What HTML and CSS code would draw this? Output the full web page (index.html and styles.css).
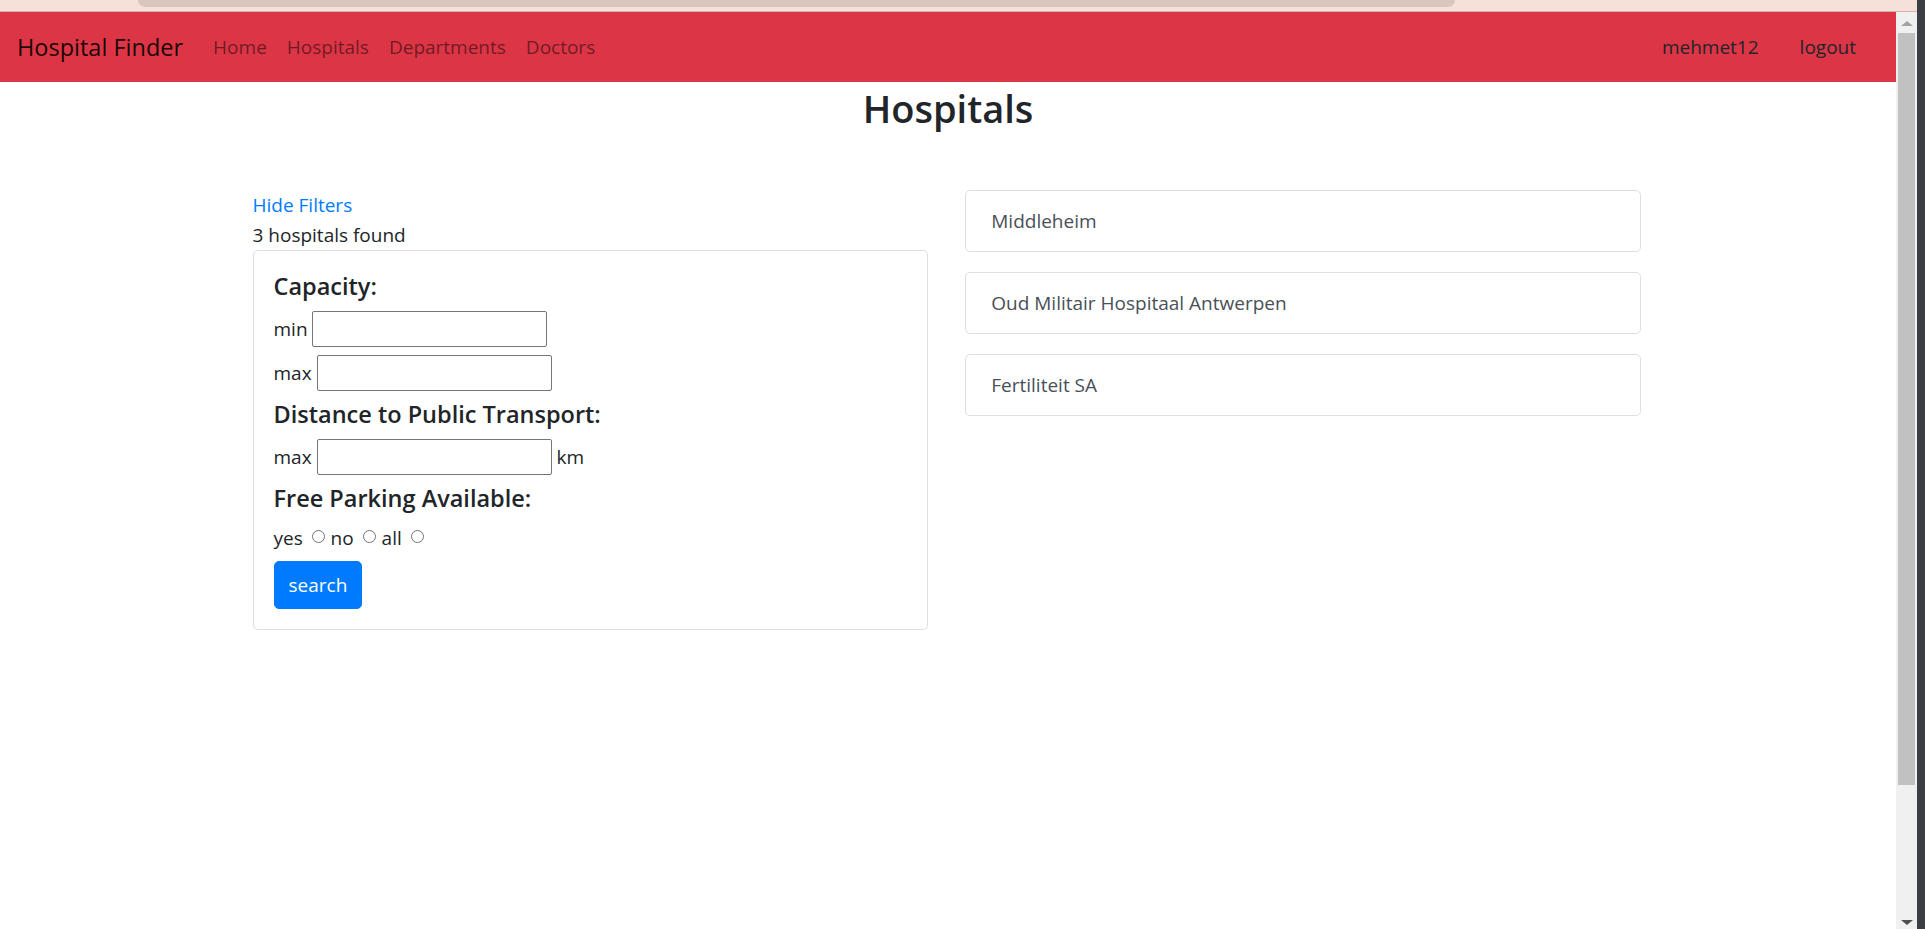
FILE: index.html
```html
<!DOCTYPE html>
<html lang="en">
<head>
<meta charset="utf-8">
<title>Hospital Finder</title>
<link rel="stylesheet" href="styles.css">
</head>
<body>
<div class="window">
  <div class="browser">
    <div class="chrome"><div class="tab-shape"></div></div>
    <div class="viewport">
      <div class="page">
        <nav class="navbar">
          <a class="brand">Hospital Finder</a>
          <ul class="nav-links">
            <li><a>Home</a></li>
            <li><a>Hospitals</a></li>
            <li><a>Departments</a></li>
            <li><a>Doctors</a></li>
          </ul>
          <ul class="nav-user">
            <li class="user">mehmet12</li>
            <li class="logout">logout</li>
          </ul>
        </nav>
        <h2 class="page-title">Hospitals</h2>
        <div class="container">
          <div class="col">
            <a class="toggle">Hide Filters</a>
            <div class="count">3 hospitals found</div>
            <div class="card filters">
              <h5 class="filter-title">Capacity:</h5>
              <div class="field-row">min <input class="field" type="text"></div>
              <div class="field-row">max <input class="field" type="text"></div>
              <h5 class="filter-title">Distance to Public Transport:</h5>
              <div class="field-row">max <input class="field" type="text"> km</div>
              <h5 class="filter-title">Free Parking Available:</h5>
              <div class="radio-row">yes <input class="radio" type="radio" name="p"> no <input class="radio" type="radio" name="p"> all <input class="radio" type="radio" name="p"></div>
              <button class="btn-search">search</button>
            </div>
          </div>
          <div class="col">
            <div class="list-item">Middleheim</div>
            <div class="list-item">Oud Militair Hospitaal Antwerpen</div>
            <div class="list-item">Fertiliteit SA</div>
          </div>
        </div>
      </div>
      <div class="scrollbar">
        <div class="arrow-up"></div>
        <div class="thumb"></div>
        <div class="arrow-down"></div>
      </div>
    </div>
  </div>
  <div class="side-strip"></div>
</div>
</body>
</html>
```
FILE: styles.css
```css
* { box-sizing: border-box; }
html, body { margin: 0; padding: 0; height: 100%; overflow: hidden; }
body {
  font-family: "Open Sans", "Liberation Sans", sans-serif;
  font-size: 19px;
  color: #212529;
  background: #fff;
}
.window { display: flex; height: 929px; width: 1925px; }
.browser { width: 1917px; display: flex; flex-direction: column; }
.side-strip { width: 8px; background: #3b3f43; }
.chrome {
  height: 12px;
  background: #f5e1da;
  border-bottom: 1px solid #d9b3aa;
}
.tab-shape {
  margin-left: 138px;
  width: 1317px;
  height: 7px;
  background: #d9c6bf;
  border-radius: 0 0 10px 10px;
}
.viewport { flex: 1; display: flex; min-height: 0; }
.page { flex: 1; min-width: 0; }
.scrollbar {
  width: 21px;
  background: #f0f0f0;
  display: flex;
  flex-direction: column;
  align-items: center;
  padding: 9px 2px 4px;
}
.arrow-up {
  width: 0; height: 0;
  border-left: 6px solid transparent;
  border-right: 6px solid transparent;
  border-bottom: 5px solid #a3a3a3;
}
.thumb {
  margin-top: 7px;
  width: 17px;
  height: 752px;
  background: #c1c1c1;
}
.arrow-down {
  margin-top: auto;
  width: 0; height: 0;
  border-left: 6px solid transparent;
  border-right: 6px solid transparent;
  border-top: 5px solid #505050;
}

.navbar {
  height: 70px;
  background: #dc3545;
  display: flex;
  align-items: center;
  padding: 0 30px 0 17px;
}
.brand {
  font-size: 23.5px;
  line-height: 36px;
  color: rgba(0,0,0,.9);
  margin-right: 20px;
}
.nav-links, .nav-user {
  list-style: none;
  margin: 0;
  padding: 0;
  display: flex;
}
.nav-links a {
  display: block;
  padding: 0 10px;
  line-height: 30px;
  color: rgba(0,0,0,.5);
}
.nav-user { margin-left: auto; }
.nav-user li { padding: 0 10px; line-height: 30px; color: #212529; }
.nav-user .user { margin-right: 21px; }

.page-title {
  margin: 2px 0 10px;
  text-align: center;
  font-size: 38px;
  font-weight: 600;
  line-height: 48px;
  color: #212529;
}
.container {
  width: 1425px;
  margin: 58px auto 0;
  padding: 0 20px 0 17px;
  display: grid;
  grid-template-columns: 1fr 1fr;
  column-gap: 37.5px;
}
.toggle {
  display: block;
  color: #007bff;
  line-height: 30px;
}
.count { line-height: 30px; }
.card {
  border: 1px solid rgba(0,0,0,.125);
  border-radius: 5px;
  background: #fff;
}
.filters { padding: 20px; }
.filter-title {
  margin: 0 0 10px;
  font-size: 23.5px;
  font-weight: 600;
  line-height: 30px;
}
.field-row {
  height: 36px;
  margin-bottom: 8px;
  display: flex;
  align-items: center;
  white-space: pre;
}
.field {
  width: 235px;
  height: 36px;
  border: 1px solid #767676;
  border-radius: 2px;
  margin: 0;
  padding: 2px 4px;
  font: inherit;
}
.radio-row {
  line-height: 30px;
  display: flex;
  align-items: center;
  white-space: pre;
  margin-bottom: 8px;
}
.radio {
  -webkit-appearance: none;
  appearance: none;
  width: 13px;
  height: 13px;
  margin: -4px 1px 0 4px;
  border: 1px solid #767676;
  border-radius: 50%;
  background: #fff;
}
.btn-search {
  display: block;
  height: 47.5px;
  padding: 0 14px;
  background: #007bff;
  border: 1px solid #007bff;
  border-radius: 5px;
  color: #fff;
  font: inherit;
  line-height: 30px;
}
.list-item {
  border: 1px solid rgba(0,0,0,.125);
  border-radius: 5px;
  padding: 15px 25px;
  line-height: 30px;
  color: #495057;
  margin-bottom: 20px;
}
```
